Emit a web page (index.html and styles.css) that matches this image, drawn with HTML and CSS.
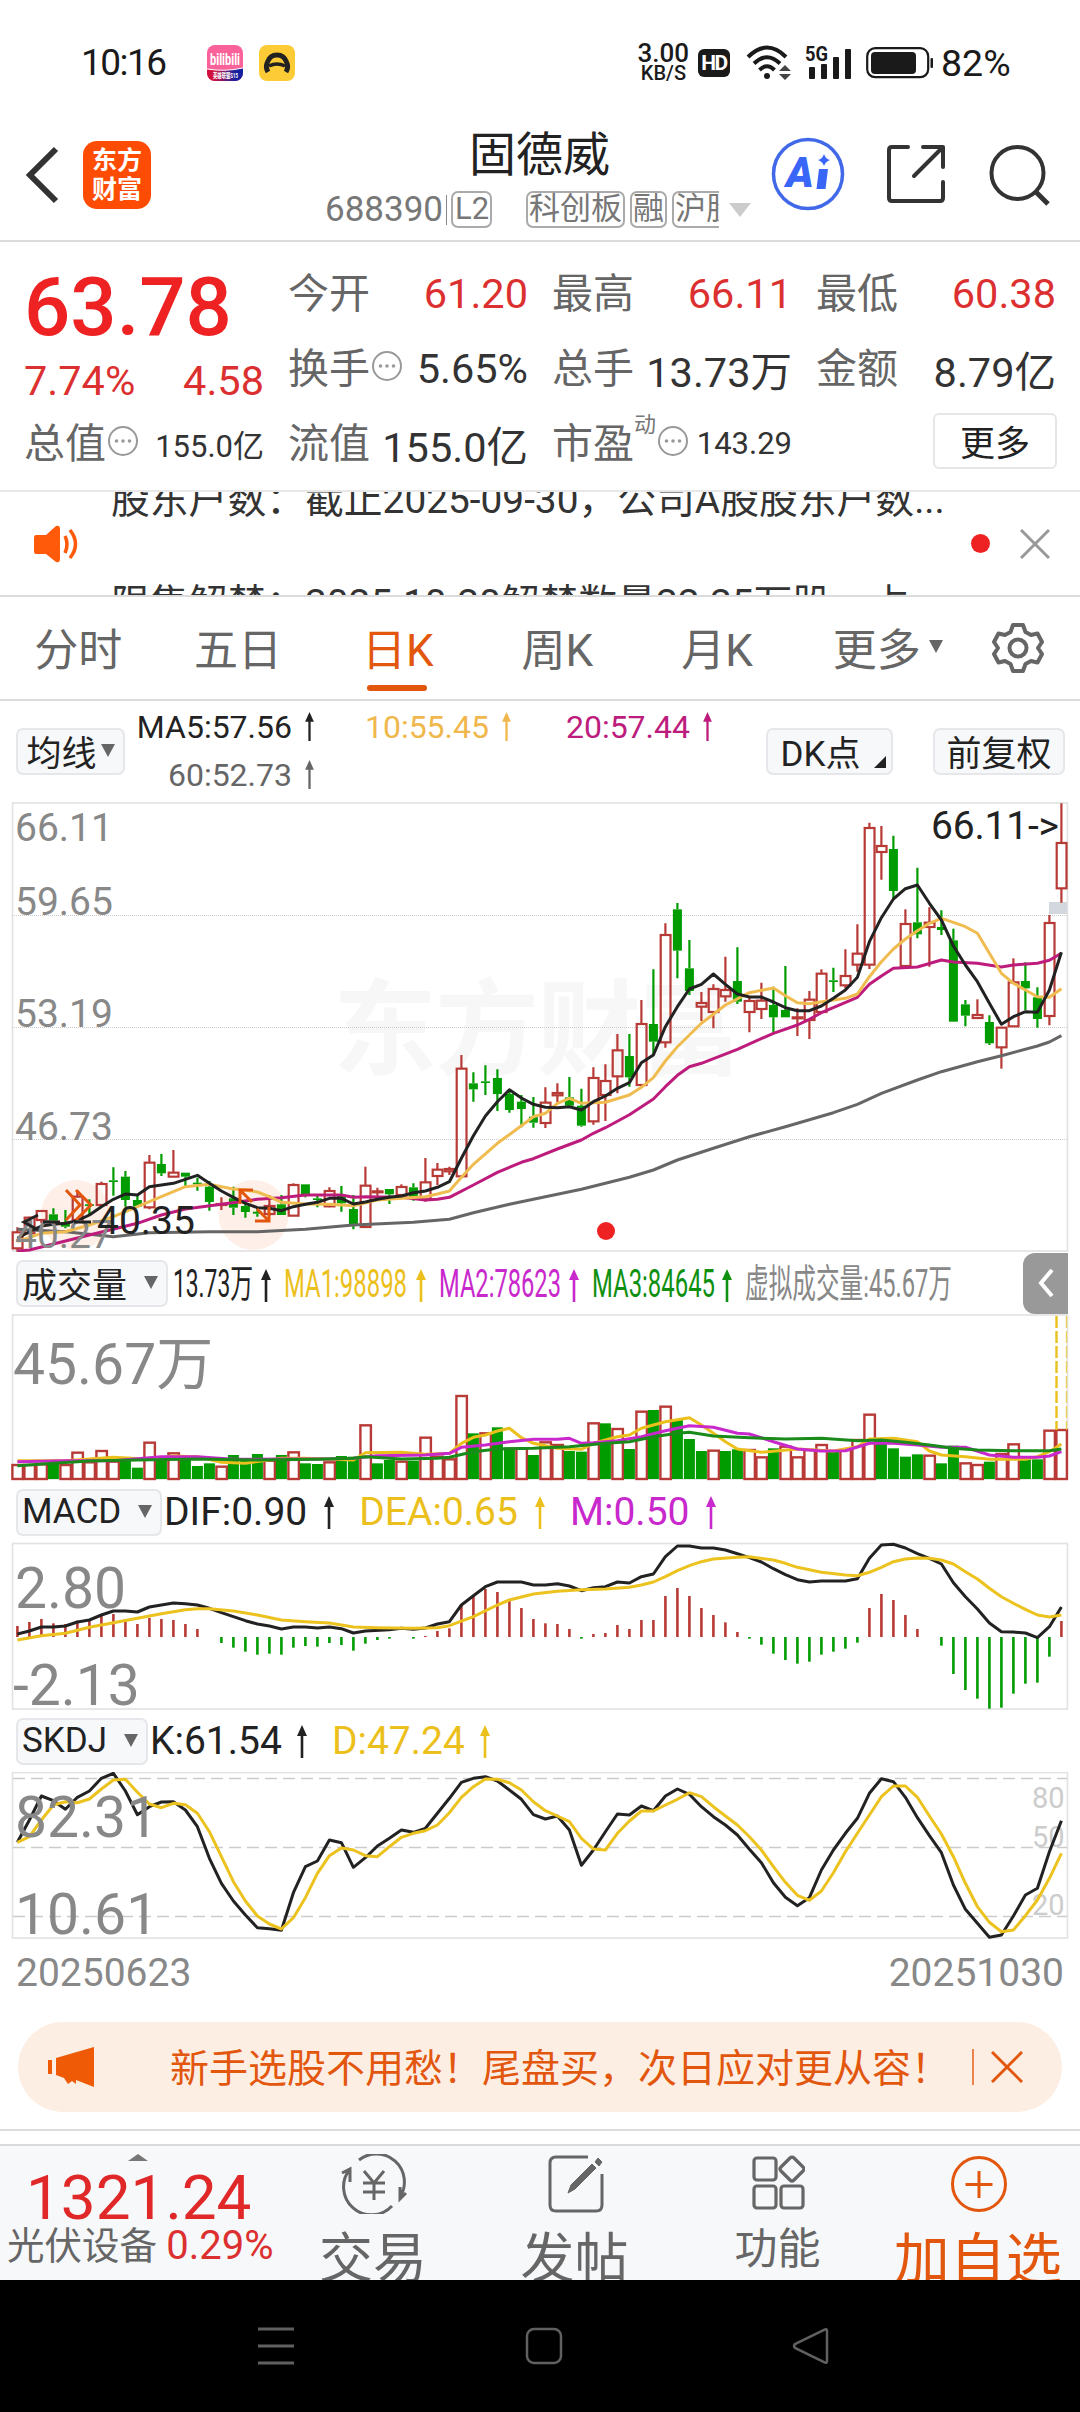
FILE: index.html
```html
<!DOCTYPE html>
<html lang="zh-CN">
<head>
    <meta charset="UTF-8">
    <meta name="viewport" content="width=device-width, initial-scale=1.0">
    <title>固德威 688390</title>
    <link rel="stylesheet" href="styles.css">
</head>
<body>
    <svg width="0" height="0" class="defs">
        <symbol id="up" viewBox="0 0 12 33">
            <path d="M6 4V33" stroke="currentColor" stroke-width="2.6"/>
            <path d="M6 0L11 11H1Z" fill="currentColor"/>
        </symbol>
        <symbol id="more-dots" viewBox="0 0 32 32">
            <circle cx="16" cy="16" r="14" fill="none" stroke="#999" stroke-width="2"/>
            <circle cx="9.5" cy="16" r="1.8" fill="#999"/>
            <circle cx="16" cy="16" r="1.8" fill="#999"/>
            <circle cx="22.5" cy="16" r="1.8" fill="#999"/>
        </symbol>
    </svg>

    <div class="status-bar">
        <span class="time">10:16</span>
        <svg class="app-icon" width="36" height="36" viewBox="0 0 36 36">
            <defs>
                <linearGradient id="bili"><stop offset="0.2" stop-color="#d0103c"/><stop offset="0.8" stop-color="#1420a0"/></linearGradient>
                <clipPath id="appClip"><rect width="36" height="36" rx="8"/></clipPath>
            </defs>
            <g clip-path="url(#appClip)">
                <rect width="36" height="36" fill="#fb6299"/>
                <path d="M0 24Q18 27 36 23V36H0Z" fill="url(#bili)"/>
                <path d="M0 24Q18 27 36 23" fill="none" stroke="#fff"/>
                <text x="3" y="20" class="bili-text" textLength="30" lengthAdjust="spacingAndGlyphs">bilibili</text>
                <text x="6" y="33" class="bili-sub" textLength="25" lengthAdjust="spacingAndGlyphs">英雄联盟S15</text>
            </g>
        </svg>
        <svg class="app-icon second" width="36" height="36" viewBox="0 0 36 36">
            <rect width="36" height="36" rx="8" fill="#fdcb35"/>
            <path d="M9 27Q6 22 8.500 17Q11 10 18 10Q25 10 27.500 17Q30 22 27 27" fill="none" stroke="#222" stroke-width="5"/>
            <path d="M10 21Q18 17 26 21" fill="none" stroke="#222" stroke-width="3.500"/>
        </svg>
        <div class="speed"><b>3.00</b><i>KB/S</i></div>
        <span class="hd">HD</span>
        <svg class="wifi" width="46" height="36" viewBox="0 0 46 36" fill="none" stroke="#1a1a1a" stroke-width="4">
            <path d="M2 12Q21-7 40 12M8 18.500Q21 6 34 18.500M13.500 25Q21 17.500 28.500 25"/>
            <circle cx="21" cy="31" r="3" fill="#1a1a1a" stroke="none"/>
            <path d="M39 20L45 26H33ZM39 35L45 29H33Z" fill="#444" stroke="none"/>
        </svg>
        <svg class="signal" width="47" height="36" viewBox="0 0 47 36" fill="#1a1a1a">
            <text x="0" y="16" class="net" textLength="23" lengthAdjust="spacingAndGlyphs">5G</text>
            <rect x="4" y="22" width="6" height="12" rx="1"/>
            <rect x="16" y="19" width="6" height="15" rx="1"/>
            <rect x="28" y="12" width="6" height="22" rx="1"/>
            <rect x="40" y="4" width="6" height="30" rx="1"/>
        </svg>
        <svg class="battery" width="68" height="32" viewBox="0 0 68 32">
            <rect x="1.200" y="1.200" width="61" height="29" rx="8" fill="none" stroke="#1a1a1a" stroke-width="2.200"/>
            <rect x="5" y="5" width="45" height="22" rx="4" fill="#1a1a1a"/>
            <rect x="64.500" y="11" width="2.500" height="10" rx="1" fill="#1a1a1a"/>
        </svg>
        <span class="percent">82%</span>
    </div>

    <header class="header">
        <svg class="back" width="34" height="58" viewBox="0 0 34 58" fill="none" stroke="#333" stroke-width="6">
            <path d="M30 3L4 29L30 55"/>
        </svg>
        <div class="logo">东方<br>财富</div>
        <div class="title">
            <h1>固德威</h1>
            <div class="codes">
                <span class="code">688390</span>
                <span class="tag l2">L2</span>
                <div class="tags">
                    <span class="tag">科创板</span><span class="tag">融</span><span class="tag">沪股通</span>
                </div>
                <span class="tri light"></span>
            </div>
        </div>
        <svg class="ai" width="74" height="74" viewBox="0 0 74 74">
            <circle cx="37" cy="37" r="34.500" fill="none" stroke="#4068e8" stroke-width="3.500"/>
            <text x="15" y="50" class="ai-text">A</text>
            <path d="M48 32H57L54.500 52H45.500Z" fill="#3a66f8"/>
            <path d="M53 17Q54.500 22 59 23Q54.500 24.500 53 29Q51.500 24.500 47 23Q51.500 22 53 17Z" fill="#3a66f8"/>
        </svg>
        <svg class="share" width="60" height="60" viewBox="0 0 60 60" fill="none" stroke="#333" stroke-width="4" stroke-linecap="round" stroke-linejoin="round">
            <path d="M22 3H6Q3 3 3 6V54Q3 57 6 57H54Q57 57 57 54V38"/>
            <path d="M37 3H57V23M57 3L28 32"/>
        </svg>
        <svg class="search" width="62" height="62" viewBox="0 0 62 62" fill="none" stroke="#333" stroke-width="4">
            <circle cx="28.500" cy="29" r="26"/>
            <path d="M46 47L59 60" stroke-width="5"/>
        </svg>
    </header>

    <section class="quote">
        <div class="main-price">
            <div class="price">63.78</div>
            <div class="change"><span>7.74%</span><span>4.58</span></div>
            <div class="cell"><label>总值</label><svg class="dots"><use href="#more-dots"/></svg><span class="small">155.0亿</span></div>
        </div>
        <div class="quote-grid">
            <div class="cell"><label>今开</label><span class="red">61.20</span></div>
            <div class="cell"><label>最高</label><span class="red">66.11</span></div>
            <div class="cell"><label>最低</label><span class="red">60.38</span></div>
            <div class="cell"><label>换手</label><svg class="dots"><use href="#more-dots"/></svg><span>5.65%</span></div>
            <div class="cell"><label>总手</label><span>13.73万</span></div>
            <div class="cell"><label>金额</label><span>8.79亿</span></div>
            <div class="cell"><label>流值</label><span>155.0亿</span></div>
            <div class="cell"><label>市盈</label><sup>动</sup><svg class="dots"><use href="#more-dots"/></svg><span class="small">143.29</span></div>
            <div class="cell end"><button class="more-btn">更多</button></div>
        </div>
    </section>

    <section class="news">
        <svg class="horn" width="46" height="38" viewBox="0 0 46 38">
            <path d="M2 10H12L22 1Q26 0 26 4V34Q26 38 22 37L12 29H2Q0 29 0 26V13Q0 10 2 10Z" fill="#ff5a0a"/>
            <path d="M31 11Q35 19 31 28M36 5Q47 19 36 33" fill="none" stroke="#ff5a0a" stroke-width="3.500"/>
        </svg>
        <div class="news-list">
            <p>股东户数：截止2025-09-30，公司A股股东户数...</p>
            <p>限售解禁：2025-10-20解禁数量22.25万股，占</p>
        </div>
        <span class="dot"></span>
        <svg class="close" width="30" height="30" viewBox="0 0 30 30" stroke="#999" stroke-width="3"><path d="M1 1L29 29M29 1L1 29"/></svg>
    </section>

    <nav class="tabs">
        <a>分时</a>
        <a>五日</a>
        <a class="active">日K</a>
        <a>周K</a>
        <a>月K</a>
        <a>更多<span class="tri tiny"></span></a>
        <svg class="gear" width="52" height="52" viewBox="0 0 52 52" fill="none" stroke="#666" stroke-width="4" stroke-linejoin="round">
            <path d="M21 3H31L33.500 10L39 13L45.500 11.500L50 20L46 26L50 32L45.500 40.500L39 39L33.500 42L31 49H21L18.500 42L13 39L6.500 40.500L2 32L6 26L2 20L6.500 11.500L13 13L18.500 10Z"/>
            <circle cx="26" cy="26" r="8.500"/>
        </svg>
    </nav>

    <section class="ma-row">
        <button class="chip">均线<span class="tri tiny"></span></button>
        <div class="ma-list">
            <span class="c-dark">MA5:57.56<svg><use href="#up"/></svg></span>
            <span class="c-yellow">10:55.45<svg><use href="#up"/></svg></span>
            <span class="c-magenta">20:57.44<svg><use href="#up"/></svg></span>
            <span class="c-gray">60:52.73<svg><use href="#up"/></svg></span>
        </div>
        <button class="chip dk">DK点<span class="corner"></span></button>
        <button class="chip">前复权</button>
    </section>

    <svg class="chart" width="1080" height="462" viewBox="0 0 1080 462">
        <text x="333" y="277" class="watermark" textLength="410">东方财富</text>
        <rect x="12.500" y="13" width="1055" height="448" class="frame"/>
        <path d="M12 125.500H1067M12 237.500H1067M12 349.500H1067" class="grid-line"/>
        <circle cx="76" cy="425" r="35" class="halo"/>
        <circle cx="253.500" cy="425" r="35" class="halo"/>
        <rect x="1049" y="112" width="18" height="12" fill="#d3d7de"/>
        <g id="candles"></g>
        <g id="maLines"></g>
        <path d="M66 400L80 415L66 430M76 400L91 415L76 430" class="mark"/>
        <path d="M240 414V400H253M240 400L252 412M255 431H269V417M269 431L257 419" class="mark"/>
        <text x="15" y="51" class="axis">66.11</text>
        <text x="15" y="125" class="axis">59.65</text>
        <text x="15" y="237" class="axis">53.19</text>
        <text x="15" y="350" class="axis">46.73</text>
        <text x="15" y="458" class="axis">40.27</text>
        <path d="M38 425L24 432L38 440" class="low-arrow"/>
        <path d="M43 432H60M74 432H91" class="low-arrow"/>
        <text x="97" y="444" class="peak">40.35</text>
        <text x="931" y="49" class="peak" textLength="128">66.11-&gt;</text>
        <circle cx="606" cy="441" r="9" fill="#ee2222"/>
    </svg>

    <div class="ind-row">
        <button class="chip wide">成交量<span class="tri"></span></button>
        <svg class="vol-legend" width="850" height="60" viewBox="170 0 850 60">
            <text x="173" y="44" class="c-dark" textLength="80" lengthAdjust="spacingAndGlyphs">13.73万</text>
            <text x="284" y="44" class="c-gold" textLength="123" lengthAdjust="spacingAndGlyphs">MA1:98898</text>
            <text x="439" y="44" class="c-purple" textLength="122" lengthAdjust="spacingAndGlyphs">MA2:78623</text>
            <text x="592" y="44" class="c-green" textLength="123" lengthAdjust="spacingAndGlyphs">MA3:84645</text>
            <text x="745" y="44" class="c-light" textLength="207" lengthAdjust="spacingAndGlyphs">虚拟成交量:45.67万</text>
            <use href="#up" x="260" y="16" width="12" height="33" class="c-dark"/>
            <use href="#up" x="415" y="16" width="12" height="33" class="c-gold"/>
            <use href="#up" x="568" y="16" width="12" height="33" class="c-purple"/>
            <use href="#up" x="721" y="16" width="12" height="33" class="c-green"/>
        </svg>
        <button class="fold"><svg width="16" height="28" viewBox="0 0 16 28" fill="none" stroke="#fff" stroke-width="4"><path d="M14 1L3 14L14 27"/></svg></button>
    </div>
    <svg class="chart" width="1080" height="168" viewBox="0 64 1080 168">
        <rect x="12.500" y="65" width="1055" height="164" class="frame"/>
        <text x="13" y="134" class="big-axis">45.67万</text>
        <g id="volBars"></g>
        <path d="M1056.500 66V180" class="projected"/>
        <path d="M1066.500 66V180" class="projected soft"/>
        <g id="volLines"></g>
    </svg>

    <div class="ind-row macd">
        <button class="chip wide">MACD<span class="tri"></span></button>
        <span class="c-dark">DIF:0.90<svg><use href="#up"/></svg></span>
        <span class="c-gold">DEA:0.65<svg><use href="#up"/></svg></span>
        <span class="c-purple">M:0.50<svg><use href="#up"/></svg></span>
    </div>
    <svg class="chart" width="1080" height="168" viewBox="0 62 1080 168">
        <rect x="12.500" y="63.500" width="1055" height="165.500" class="frame"/>
        <text x="15" y="128" class="big-axis">2.80</text>
        <text x="13" y="224.500" class="big-axis">-2.13</text>
        <g id="macdBars"></g>
        <g id="macdLines"></g>
    </svg>

    <div class="ind-row skdj">
        <button class="chip wide">SKDJ<span class="tri"></span></button>
        <span class="c-dark">K:61.54<svg><use href="#up"/></svg></span>
        <span class="c-gold">D:47.24<svg><use href="#up"/></svg></span>
    </div>
    <svg class="chart" width="1080" height="168" viewBox="0 62 1080 168">
        <rect x="12.500" y="62.500" width="1055" height="165.500" class="frame"/>
        <path d="M13 68.500H1067M13 137.500H1067M13 206.500H1067" class="dash-line"/>
        <text x="1032" y="97.500" class="level">80</text>
        <text x="1032" y="137" class="level">50</text>
        <text x="1032" y="205" class="level">20</text>
        <g id="skdjLines"></g>
        <text x="15" y="127" class="big-axis">82.31</text>
        <text x="15" y="223.500" class="big-axis">10.61</text>
    </svg>

    <div class="dates"><span>20250623</span><span>20251030</span></div>

    <div class="banner">
        <svg width="46" height="40" viewBox="0 0 46 40" fill="#ee5a06"><path d="M0 13H4V27H0ZM8 11L46 0V40L28 33V37L24 34L20 37L16 31L8 28Z"/></svg>
        <span class="banner-text">新手选股不用愁！尾盘买，次日应对更从容！</span>
        <span class="bar"></span>
        <svg class="banner-close" width="32" height="32" viewBox="0 0 32 32" stroke="#e2560d" stroke-width="3"><path d="M1 1L31 31M31 1L1 31"/></svg>
    </div>

    <footer class="bottom">
        <div class="sector">
            <span class="caret"></span>
            <div class="index">1321.24</div>
            <div class="sector-name">光伏设备 <span>0.29%</span></div>
        </div>
        <div class="item">
            <svg width="66" height="60" viewBox="0 0 66 60" fill="none" stroke="#666" stroke-width="3">
                <path d="M18 6A28 28 0 0 1 59 43M51 52A28 28 0 0 1 9 15M1 19L9 15V28M65 39L59 45V33"/>
                <path d="M23 17L33 29L43 17M33 29V46M22 29H44M22 38H44"/>
            </svg>
            <span>交易</span>
        </div>
        <div class="item">
            <svg width="56" height="60" viewBox="0 0 56 60" fill="none" stroke="#666" stroke-width="3">
                <path d="M40 3H8Q2 3 2 9V51Q2 57 8 57H48Q54 57 54 51V20"/>
                <path d="M20 39L23 31L44 10L48 14L27 35ZM47 8L50 4L54 8L51 12Z" fill="#666" stroke-width="1"/>
            </svg>
            <span>发帖</span>
        </div>
        <div class="item small-item">
            <svg width="54" height="60" viewBox="0 0 54 60" fill="none" stroke="#666" stroke-width="3.200">
                <rect x="3" y="4" width="22" height="22" rx="3"/>
                <rect x="3" y="32" width="22" height="22" rx="3"/>
                <rect x="30" y="32" width="22" height="22" rx="3"/>
                <path d="M39 4Q41 2 43 4L52 13Q54 15 52 17L43 26Q41 28 39 26L30 17Q28 15 30 13Z"/>
            </svg>
            <span>功能</span>
        </div>
        <div class="item add">
            <svg width="58" height="60" viewBox="0 0 58 60" fill="none" stroke="#e2560d" stroke-width="3">
                <circle cx="29" cy="30" r="26.500"/>
                <path d="M29 17V44M15.500 30.500H42.500"/>
            </svg>
            <span>加自选</span>
        </div>
    </footer>

    <div class="sys-nav">
        <svg width="38" height="38" viewBox="0 0 38 38" stroke="#606060" stroke-width="3"><path d="M1 2H37M1 19H37M1 36H37"/></svg>
        <svg width="38" height="38" viewBox="0 0 38 38" fill="none" stroke="#606060" stroke-width="2.500"><rect x="2" y="2" width="34" height="34" rx="7"/></svg>
        <svg width="38" height="38" viewBox="0 0 38 38" fill="none" stroke="#606060" stroke-width="2.500"><path d="M35 4V34Q35 37 32 35L3 21Q1 19 3 17L32 3Q35 1 35 4Z"/></svg>
    </div>

    <script src="charts.js"></script>
</body>
</html>
```

FILE: styles.css
```css
* {
    box-sizing: border-box;
}

body {
    margin: 0;
    width: 1080px;
    height: 2412px;
    overflow: hidden;
    background: #fff;
    color: #333;
    font-family: Roboto, "Noto Sans CJK SC", sans-serif;
}

h1, p {
    margin: 0;
    font-weight: 400;
}

button {
    font-family: inherit;
    padding: 0;
    color: #222;
}

svg {
    display: block;
    flex-shrink: 0;
}

.defs {
    position: absolute;
}

/* colours of the indicator values */
.c-dark { color: #222; fill: #222; }
.c-yellow { color: #f0b84c; fill: #f0b84c; }
.c-magenta { color: #bd1c7c; fill: #bd1c7c; }
.c-gray { color: #666; fill: #666; }
.c-gold { color: #ecc01c; fill: #ecc01c; }
.c-purple { color: #c828cc; fill: #c828cc; }
.c-green { color: #109010; fill: #109010; }
.c-light { color: #888; fill: #888; }

.tri {
    border: 7px solid transparent;
    border-top: 13px solid #666;
    border-bottom: 0;
}

.tri.light {
    border-width: 14px 11px 0;
    border-top-color: #ccc;
}

.tri.tiny {
    border-width: 13px 7px 0;
}

/* status bar */
.status-bar {
    display: flex;
    align-items: center;
    height: 125px;
    padding-left: 81px;
    color: #1a1a1a;
}

.time {
    width: 126px;
    font-size: 37px;
    letter-spacing: -1.5px;
}

.app-icon.second {
    margin-left: 16px;
}

.bili-text {
    font-size: 17px;
    font-weight: 700;
    fill: #fff;
}

.bili-sub {
    font-size: 7px;
    font-weight: 700;
    fill: #fff;
}

.speed {
    width: 52px;
    margin-left: 342px;
    text-align: right;
    line-height: 20px;
}

.speed b {
    display: block;
    font-size: 26px;
    font-weight: 500;
}

.speed i {
    display: block;
    font-size: 20px;
    font-style: normal;
    font-weight: 500;
    margin-right: 3px;
}

.hd {
    width: 32px;
    height: 28px;
    margin-left: 9px;
    border-radius: 6px;
    background: #1a1a1a;
    color: #fff;
    font-size: 21px;
    font-weight: 700;
    line-height: 28px;
    text-align: center;
    letter-spacing: -1.5px;
}

.wifi {
    margin-left: 16px;
}

.signal {
    margin-left: 13px;
}

.net {
    font-size: 20px;
    font-weight: 700;
}

.battery {
    margin-left: 14px;
}

.percent {
    margin-left: 7px;
    font-size: 37.5px;
}

/* header */
.header {
    display: flex;
    align-items: center;
    height: 117px;
    padding-left: 26px;
    border-bottom: 2px solid #dcdcdc;
}

.back {
    margin-top: -16px;
}

.logo {
    width: 68px;
    height: 68px;
    margin: -16px 0 0 23px;
    padding-top: 5px;
    border-radius: 14px;
    background: #ff4c04;
    color: #fff;
    font-size: 25px;
    font-weight: 700;
    line-height: 29px;
    text-align: center;
}

.title {
    width: 430px;
    margin-left: 174px;
}

.title h1 {
    margin: -10px 0 4px 144px;
    color: #222;
    font-size: 47px;
    line-height: 62px;
}

.codes {
    display: flex;
    align-items: center;
    height: 44px;
    margin-top: -2px;
    color: #777;
    font-size: 35px;
}

.code {
    width: 122px;
    border-right: 1px solid #888;
    line-height: 30px;
}

.tag {
    flex-shrink: 0;
    height: 37px;
    margin-right: 5px;
    padding: 0 1px;
    border: 2px solid #aaa;
    border-radius: 7px;
    font-size: 31px;
    line-height: 31px;
}

.tag.l2 {
    width: 41px;
    margin: 0 34px 0 4px;
    padding: 0 2px;
}

.tags {
    display: flex;
    width: 193px;
    overflow: hidden;
}

.tri.light {
    margin-left: 10px;
}

.ai {
    margin: -17px 0 0 16px;
}

.ai-text {
    font-size: 42px;
    font-weight: 900;
    font-style: italic;
    fill: #3a66f8;
}

.share {
    margin: -17px 0 0 41px;
}

.search {
    margin: -15px 0 0 43px;
}

/* quote */
.quote {
    display: flex;
    gap: 24px;
    height: 250px;
    padding: 14px 24px 0 24px;
    border-bottom: 2px solid #e8e8e8;
}

.main-price {
    width: 240px;
}

.price {
    height: 88px;
    padding-top: 5px;
    color: #ee2222;
    font-size: 81.5px;
    font-weight: 500;
    line-height: 92px;
}

.change {
    display: flex;
    justify-content: space-between;
    height: 62px;
    color: #dc3030;
    font-size: 41.5px;
    line-height: 74px;
}

.quote-grid {
    display: grid;
    flex: 1;
    grid-template-columns: repeat(3, 240px);
    grid-auto-rows: 75px;
    column-gap: 24px;
}

.cell {
    display: flex;
    align-items: center;
    height: 75px;
    font-size: 41.5px;
    white-space: nowrap;
}

.cell label {
    margin-top: -7px;
    color: #666;
    font-size: 41px;
}

.cell span {
    margin-left: auto;
}

.cell .small {
    font-size: 31px;
}

.cell sup {
    margin-top: -38px;
    color: #777;
    font-size: 22px;
    line-height: 1;
}

.cell.end {
    justify-content: flex-end;
}

.red {
    color: #dc3030;
}

.dots {
    width: 32px;
    height: 32px;
    margin: -6px 0 0 1px;
}

.more-btn {
    width: 124px;
    height: 56px;
    margin: -5px -1px 0 0;
    padding-bottom: 4px;
    border: 2px solid #e6e6e6;
    border-radius: 6px;
    background: #fff;
    font-size: 35px;
}

/* news ticker */
.news {
    display: flex;
    align-items: center;
    height: 105px;
    padding-left: 34px;
    border-bottom: 2px solid #dcdcdc;
    overflow: hidden;
}

.news-list {
    width: 860px;
    height: 103px;
    margin-left: 31px;
    overflow: hidden;
}

.news-list p {
    font-size: 38.8px;
    line-height: 104px;
    white-space: nowrap;
}

.news-list p:first-child {
    margin-top: -44px;
}

.dot {
    width: 19px;
    height: 19px;
    border-radius: 50%;
    background: #ee2222;
}

.close {
    margin-left: 30px;
}

/* period tabs */
.tabs {
    display: flex;
    align-items: center;
    height: 104px;
    border-bottom: 2px solid #dcdcdc;
}

.tabs a {
    position: relative;
    display: flex;
    align-items: center;
    justify-content: center;
    width: 159.7px;
    height: 100%;
    padding: 0 3px 3px 0;
    color: #666;
    font-size: 44px;
}

.tabs a.active {
    color: #e2560d;
}

.tabs a.active::after {
    content: "";
    position: absolute;
    bottom: 8px;
    left: 48px;
    width: 60px;
    height: 6px;
    border-radius: 3px;
    background: #e2560d;
}

.tabs .tri {
    margin: 0 -22px 0 8px;
}

.gear {
    margin-left: 34px;
}

/* moving averages */
.chip {
    display: flex;
    align-items: center;
    justify-content: center;
    flex-shrink: 0;
    height: 47px;
    padding-bottom: 3px;
    border: 2px solid #e6e7ea;
    border-radius: 7px;
    background: #f7f8fa;
    font-size: 35px;
}

.ma-row {
    display: flex;
    align-items: center;
    height: 89px;
    padding: 12px 15px 0 16px;
}

.ma-row .chip {
    width: 132px;
}

.ma-row .chip:first-child {
    width: 109px;
}

.ma-row .chip.dk {
    position: relative;
    width: 127px;
    margin-right: 40px;
    padding-right: 18px;
}

.chip .tri.tiny {
    margin-left: 4px;
}

.corner {
    position: absolute;
    right: 5px;
    bottom: 5px;
    border-left: 12px solid transparent;
    border-bottom: 12px solid #222;
}

.ma-list {
    display: grid;
    grid-template-columns: 178px 197px 201px;
    width: 641px;
    padding-left: 12px;
    margin-top: -2px;
    font-size: 32px;
    line-height: 48px;
}

.ma-list span {
    display: flex;
    align-items: center;
    justify-content: flex-end;
}

.ma-list svg {
    width: 11px;
    height: 29px;
    margin-left: 12px;
}

/* charts */
.frame {
    fill: none;
    stroke: #e2e2e2;
    stroke-width: 1.6;
}

.grid-line {
    stroke: #ccc;
    stroke-dasharray: 1 1;
}

.dash-line {
    stroke: #ccc;
    stroke-width: 1.4;
    stroke-dasharray: 12 6;
}

.watermark {
    font-size: 104px;
    font-weight: 700;
    fill: #f7f7f7;
}

.halo {
    fill: #fef0e8;
}

.mark {
    fill: none;
    stroke: #e2560d;
    stroke-width: 3;
}

.low-arrow {
    fill: none;
    stroke: #222;
    stroke-width: 3;
}

.axis {
    font-size: 39px;
    fill: #888;
}

.peak {
    font-size: 39px;
    fill: #222;
}

.big-axis {
    font-size: 57px;
    fill: #888;
}

.level {
    font-size: 29px;
    fill: #ccc;
}

.projected {
    stroke: #ecc01c;
    stroke-width: 2.4;
    stroke-dasharray: 12 3;
}

.projected.soft {
    stroke-width: 1.4;
    opacity: 0.7;
}

.line {
    fill: none;
    stroke-width: 3;
    stroke-linejoin: round;
}

/* indicator headers */
.ind-row {
    display: flex;
    align-items: center;
    height: 62px;
    padding-left: 16px;
    font-size: 39px;
}

.ind-row .chip {
    justify-content: space-between;
    width: 152px;
    padding: 0 8px 2px 4px;
}

.ind-row > span {
    display: flex;
    align-items: center;
    margin-right: 24px;
}

.ind-row > span svg {
    width: 12px;
    height: 33px;
    margin-left: 16px;
}

.ind-row.macd {
    height: 60px;
}

.ind-row.macd .chip {
    width: 146px;
    margin-right: 2px;
}

.ind-row.skdj .chip {
    width: 132px;
    margin-right: 2px;
}

.ind-row.skdj > span svg {
    margin-left: 14px;
}

.vol-legend {
    margin-left: 2px;
    font-size: 38.5px;
}

.fold {
    display: flex;
    align-items: center;
    justify-content: center;
    width: 45px;
    height: 61px;
    margin-left: 3px;
    border: 0;
    border-radius: 12px 0 0 12px;
    background: #999;
}

.dates {
    display: flex;
    justify-content: space-between;
    height: 82px;
    padding: 10px 16px 0 16px;
    color: #888;
    font-size: 39px;
}

/* promo banner */
.banner {
    display: flex;
    align-items: center;
    width: 1044px;
    height: 90px;
    margin: 0 18px 17px;
    padding-left: 30px;
    border-radius: 45px;
    background: #fdeee4;
    color: #e2560d;
}

.banner-text {
    width: 802px;
    margin: -5px 0 0 76px;
    font-size: 39px;
    white-space: nowrap;
}

.bar {
    width: 2px;
    height: 36px;
    background: #e2560d;
    opacity: 0.7;
}

.banner-close {
    margin-left: 17px;
}

/* bottom bar */
.bottom {
    display: flex;
    height: 151px;
    border-top: 2px solid #dcdcdc;
    background: linear-gradient(#fff 13px, #d8dade 13px, #d8dade 15px, #f7f8fa 15px);
    overflow: hidden;
}

.sector {
    width: 274px;
    padding-top: 23px;
}

.caret {
    display: block;
    width: 0;
    margin-left: 128px;
    border: 10px solid transparent;
    border-top: 0;
    border-bottom: 7px solid #777;
}

.index {
    height: 64px;
    margin-left: 26px;
    color: #e02828;
    font-size: 62px;
    line-height: 73px;
}

.sector-name {
    margin: -4px 0 0 7px;
    color: #666;
    font-size: 37.5px;
    line-height: 50px;
    white-space: nowrap;
}

.sector-name span {
    color: #dc3030;
    font-size: 40px;
}

.item {
    display: flex;
    flex-direction: column;
    align-items: center;
    width: 202px;
    padding-top: 23px;
    color: #666;
    font-size: 54px;
    line-height: 64px;
    white-space: nowrap;
}

.item span {
    margin: 14px 3px 0 0;
}

.small-item {
    font-size: 43px;
    line-height: 50px;
}

.small-item span {
    margin: 10px 0 0;
}

.add {
    color: #e2560d;
    font-size: 56px;
}

/* system navigation */
.sys-nav {
    display: flex;
    justify-content: space-between;
    height: 132px;
    padding: 47px 250px 0 257px;
    background: #000;
}
```

FILE: charts.js
```js
// one bar every 12px, y values are in thirds of a pixel
const NS = 'http://www.w3.org/2000/svg';
const RED = '#b83a36';
const GREEN = '#009c00';
const X = i => 17.4 + i * 12;
const Y = v => v / 3;

function add(parent, tag, attrs) {
    const el = document.createElementNS(NS, tag);
    for (const key in attrs) el.setAttribute(key, attrs[key]);
    document.getElementById(parent).appendChild(el);
}

// "index:value" pairs
function line(parent, color, data) {
    const points = data.trim().split(/\s+/).map(p => {
        const [i, v] = p.split(':').map(Number);
        return X(i).toFixed(1) + ',' + Y(v).toFixed(1);
    });
    add(parent, 'polyline', { points: points.join(' '), stroke: color, class: 'line' });
}

// colour, high, body top, body bottom, low
const candles = `r 1312 1327 1375 1385|r 1280 1283 1330 1330|r 1260 1263 1290 1300|g 1255 1273 1292 1300|g 1260 1297 1310 1315
r 1200 1220 1290 1290|g 1228 1243 1248 1275|r 1175 1182 1245 1245|g 1132 1171 1176 1217|g 1143 1160 1230 1250
g 1217 1230 1250 1250|r 1095 1118 1252 1258|g 1092 1122 1150 1158|r 1080 1148 1160 1160|g 1148 1148 1160 1190
g 1163 1178 1183 1202|g 1173 1190 1236 1262|r 1222 1242 1245 1260|g 1190 1225 1253 1275|g 1230 1248 1266 1283
g 1255 1265 1271 1280|r 1215 1248 1272 1278|g 1215 1243 1275 1275|r 1180 1185 1277 1277|g 1183 1183 1213 1222
g 1215 1225 1230 1252|r 1192 1203 1249 1252|g 1188 1215 1240 1265|g 1215 1257 1303 1318|r 1130 1187 1311 1311
r 1193 1204 1207 1217|g 1197 1197 1213 1242|r 1183 1191 1215 1215|g 1180 1192 1225 1232|r 1104 1177 1228 1235
r 1119 1139 1158 1185|r 1130 1137 1144 1155|r 795 836 1159 1159|g 847 880 898 935|g 826 874 879 915
g 838 864 912 963|g 900 912 960 968|g 915 935 957 1012|g 921 980 998 1013|r 892 938 999 1014
r 880 909 916 940|g 861 922 947 947|g 896 947 1007 1010|r 832 864 994 1004|r 823 873 915 993
r 732 781 859 910|g 732 798 862 890|r 630 702 885 885|g 538 702 755 795|r 400 435 757 773
g 339 358 482 565|g 450 535 603 615|r 606 639 650 693|r 583 597 666 715|r 500 600 619 635
g 472 573 635 642|r 620 633 666 727|r 578 632 657 687|g 590 645 682 728|g 528 660 682 682
r 655 682 685 738|r 603 629 690 747|r 538 551 666 666|g 533 571 576 606|r 478 558 586 595
r 403 491 524 545|r 98 114 524 537|r 108 168 186 269|g 137 177 303 325|r 358 402 528 528
g 233 397 433 445|r 352 398 411 530|g 361 411 420 435|g 416 451 695 695|g 630 643 677 709
r 628 675 684 684|g 676 696 760 765|r 713 713 772 836|r 505 577 709 709|g 517 573 595 660
g 592 622 687 713|r 375 399 678 706|r 40 159 295 338`;

candles.split(/[|\n]/).forEach((row, i) => {
    const [c, ...v] = row.split(' ');
    const [high, top, bottom, low] = v.map(n => Y(n));
    const color = c === 'r' ? RED : GREEN;
    add('candles', 'path', {
        d: `M${X(i)} ${high}V${top}M${X(i)} ${bottom}V${low}`,
        stroke: color, 'stroke-width': 2.2
    });
    if (c === 'r') {
        add('candles', 'rect', {
            x: X(i) - 4.7, y: top, width: 9.8, height: bottom - top,
            fill: 'none', stroke: color, 'stroke-width': 2.2
        });
    } else {
        add('candles', 'rect', { x: X(i) - 4.5, y: top, width: 9, height: bottom - top, fill: color });
    }
});

line('maLines', '#666', '0:1318 4:1325 8:1340 11:1328 16:1325 20:1325 24:1318 28:1305 33:1297 36:1288 38:1268 41:1243 44:1220 47:1198 51:1162 53:1140 55:1110 58:1075 61:1040 64:1010 68:968 70:943 72:910 75:870 77:845 80:815 82:797 85:768 86:756 87:737');
line('maLines', '#bd1c7c', '0:1383 1:1380 3:1362 6:1335 10:1300 12:1275 14:1257 17:1243 20:1228 22:1223 24:1215 27:1215 28:1222 29:1220 32:1222 34:1230 35:1228 36:1222 38:1185 40:1147 42:1117 43:1106 45:1077 47:1050 48:1030 49:1013 51:974 53:927 54:890 55:856 56:830 57:820 60:778 63:730 65:705 66:688 67:668 70:622 71:583 72:558 73:535 75:531 77:510 78:516 80:520 82:531 83:525 85:520 86:511 87:490');
line('maLines', '#f0bc50', '0:1355 2:1330 4:1325 6:1305 8:1280 10:1250 12:1220 14:1190 16:1183 17:1190 18:1197 19:1200 20:1206 21:1220 22:1237 24:1242 26:1243 28:1247 30:1230 32:1225 34:1220 35:1212 36:1203 37:1162 38:1123 40:1060 42:1007 43:980 44:970 45:940 46:925 47:940 49:937 51:915 52:892 53:863 54:813 55:770 57:700 58:673 59:645 61:608 63:594 64:617 65:638 66:641 68:630 69:625 70:612 71:560 72:515 73:477 74:447 75:422 76:400 77:385 78:397 79:410 80:430 81:490 82:550 83:580 84:600 85:620 86:622 87:596');
line('maLines', '#222', '0:1345 1:1325 2:1308 3:1303 4:1300 5:1292 6:1275 7:1250 8:1228 9:1212 10:1215 11:1190 12:1185 13:1180 14:1168 15:1156 16:1180 17:1203 18:1222 19:1240 20:1253 21:1255 22:1262 23:1250 24:1243 25:1237 26:1225 27:1225 28:1242 29:1236 30:1228 31:1222 32:1218 33:1208 34:1203 35:1192 36:1175 37:1105 38:1037 39:978 40:935 41:899 42:924 43:943 44:952 45:953 46:950 47:960 48:935 49:918 50:895 51:878 52:818 53:795 54:710 55:650 56:597 57:583 58:552 59:583 60:612 61:621 62:621 63:636 64:653 65:662 66:662 67:648 68:625 69:600 70:562 71:455 72:383 73:327 74:296 75:285 76:340 77:390 78:468 79:525 80:575 81:640 82:703 83:680 84:665 85:667 86:600 87:487');

// volume bar tops, negative = falling day
const volume = [645, 645, 643, -640, 645, 608, 637, 603, 635, -628, -653, 578, -630, 610, -630, -648, -640, 650, -615, -625,
    -612, 632, -615, 607, -640, -642, 637, -618, -620, 526, -640, -630, 635, -632, 563, 620, 628, 438, -550, 550,
    -532, -592, 595, -615, 577, 585, -603, -605, 520, -520, 537, -597, 485, -480, 470, -510, -567, -603, 602, -603,
    -598, 600, 622, -595, 590, 622, 600, 585, -605, 600, 570, 494, -565, -595, -620, -613, 617, -640, -587, 640,
    645, -635, 612, 583, -625, -628, 542, 540];
volume.forEach((v, i) => {
    const top = Y(Math.abs(v));
    if (v > 0) {
        add('volBars', 'rect', { x: X(i) - 5, y: top, width: 10.5, height: 229 - top, fill: '#fff', stroke: RED, 'stroke-width': 2.4 });
    } else {
        add('volBars', 'rect', { x: X(i) - 5.5, y: top, width: 11, height: 229 - top, fill: GREEN });
    }
});

line('volLines', '#ecc01c', '0:632 4:632 8:622 11:628 13:618 15:620 17:637 19:640 22:625 24:625 28:630 29:608 32:607 34:613 36:610 37:580 38:562 39:555 40:543 41:535 42:563 43:580 45:595 47:598 48:580 50:560 51:555 52:535 54:515 56:503 57:525 58:550 59:575 60:597 62:607 65:597 68:603 70:590 71:567 73:565 75:575 76:603 77:615 79:620 81:628 84:628 85:620 86:605 87:582');
line('volLines', '#c828cc', '0:635 4:632 8:632 12:620 15:620 18:628 22:627 26:627 28:625 30:617 34:615 36:610 37:592 39:585 41:575 43:568 45:568 46:565 47:580 48:578 50:572 52:560 54:542 56:527 58:532 60:550 61:552 63:575 65:597 67:603 69:602 71:580 73:580 75:585 77:592 79:592 81:615 83:622 85:622 86:618 87:605');
line('volLines', '#1a8a1a', '0:647 3:640 6:633 10:630 15:627 20:630 25:628 28:625 29:620 32:627 35:625 36:622 38:605 40:597 43:595 46:590 49:580 51:575 53:560 55:550 56:547 58:558 61:563 64:567 67:565 70:572 72:570 74:577 76:585 78:595 80:600 83:602 86:602 87:597');

// MACD histogram around the zero line at 471
const macd = [438, 426, 417, 430, 432, 422, 418, 408, 402, 417, 432, 414, 417, 420, 432, 447, 471, 489, 503, 515,
    524, 521, 524, 503, 498, 500, 489, 495, 512, 491, 480, 476, 471, 476, 468, 453, 445, 375, 345, 327,
    336, 362, 384, 417, 430, 432, 447, 476, 462, 459, 435, 447, 420, 420, 348, 324, 348, 384, 405, 427,
    456, 476, 494, 521, 540, 551, 545, 524, 515, 506, 488, 384, 342, 360, 405, 447, 471, 497, 582, 630,
    656, 686, 683, 641, 611, 608, 530, 423];
macd.forEach((v, i) => {
    add('macdBars', 'path', { d: `M${X(i)} 157V${Y(v)}`, stroke: v < 471 ? RED : GREEN, 'stroke-width': 2.6 });
});

line('macdLines', '#222', '0:462 1:453 2:441 3:441 4:438 5:426 6:420 7:405 8:393 9:393 10:396 11:381 12:375 13:369 14:371 15:375 16:385 17:398 18:410 19:422 20:432 21:438 22:447 23:441 24:441 25:444 26:441 27:446 28:459 29:453 31:449 32:445 33:448 34:444 35:432 36:425 37:375 38:347 39:320 40:306 42:306 43:315 44:315 45:311 46:318 47:332 48:323 49:320 50:306 51:309 52:290 53:282 54:230 55:198 56:198 57:204 58:204 59:210 60:221 61:233 62:246 63:266 64:284 65:299 66:306 67:303 69:303 70:296 71:235 72:195 73:193 74:204 75:221 76:235 77:252 78:308 79:350 80:387 81:429 82:455 83:456 84:459 85:473 86:440 87:381');
line('macdLines', '#ecc21e', '0:480 2:467 4:460 6:442 8:428 10:415 12:401 14:389 15:386 16:386 18:393 20:405 22:420 24:425 26:429 28:441 30:443 33:445 35:443 36:437 38:410 40:375 41:360 43:342 45:334 47:329 49:327 51:322 52:315 53:306 54:290 55:272 56:257 57:245 58:237 60:232 61:230 63:240 64:250 65:262 67:277 69:285 70:287 71:277 72:262 73:245 74:237 75:234 76:235 77:240 78:252 79:275 80:297 81:325 82:350 83:370 84:388 85:405 86:411 87:405');

line('skdjLines', '#222', '0:397 1:330 2:258 3:272 4:298 5:262 6:243 7:205 8:190 9:243 10:314 11:290 12:276 13:275 14:300 15:350 16:445 17:520 18:573 19:615 20:653 21:656 22:661 23:548 24:470 25:453 26:390 27:398 28:472 29:443 30:408 31:385 32:360 33:367 34:355 35:310 36:265 37:217 38:205 39:200 40:213 41:240 42:268 43:314 44:327 45:318 46:360 47:466 48:420 49:365 50:312 51:315 52:288 53:302 54:258 55:237 56:253 57:290 58:320 59:345 60:375 61:418 62:458 63:518 64:562 65:587 66:563 67:480 68:420 69:370 70:325 71:250 72:206 73:215 74:262 75:323 76:377 77:428 78:525 79:598 80:640 81:682 82:675 83:618 84:555 85:535 86:425 87:332');
line('skdjLines', '#ecc21e', '0:397 1:380 2:330 3:285 4:275 5:278 6:267 7:237 8:210 9:208 10:247 11:282 12:293 13:280 14:284 15:310 16:365 17:440 18:515 19:573 20:618 21:642 22:657 23:623 24:563 25:490 26:437 27:414 28:420 29:437 30:440 31:410 32:382 33:370 34:362 35:345 36:308 37:262 38:230 39:207 40:208 41:218 42:240 43:275 44:302 45:318 46:335 47:385 48:417 49:420 50:370 51:333 52:303 53:303 54:285 55:268 56:248 57:260 58:290 59:318 60:345 61:380 62:420 63:470 64:517 65:556 66:571 67:543 68:488 69:425 70:370 71:315 72:260 73:228 74:228 75:262 76:318 77:372 78:440 79:520 80:590 81:637 82:665 83:660 84:617 85:570 86:505 87:430');
```
